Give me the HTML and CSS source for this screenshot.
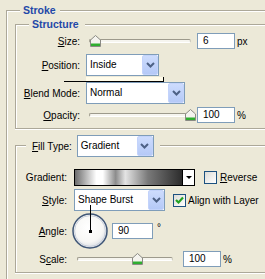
FILE: index.html
```html
<!DOCTYPE html>
<html>
<head>
<meta charset="utf-8">
<link rel="stylesheet" href="styles.css">
</head>
<body>
<div class="panel">
  <div class="group outer">
    <div class="title t-main">Stroke</div>

    <div class="group inner structure">
      <div class="title t-sub">Structure</div>

      <div class="row r-size">
        <span class="lbl lbl-s"><u>S</u>ize:</span>
        <div class="slider sl-s">
          <div class="track"></div>
          <svg class="thumb" style="left:4px" width="11" height="12" viewBox="0 0 11 12"><path d="M5.5 0.5 L10.5 5 V11.5 H0.5 V5 Z" fill="#f4f3ee" stroke="#8a8a84"/><rect x="1" y="8.5" width="9" height="2.5" fill="#2fae2f"/></svg>
        </div>
        <div class="input in-s">6</div>
        <span class="unit">px</span>
      </div>

      <div class="row r-pos">
        <span class="lbl lbl-s"><u>P</u>osition:</span>
        <div class="select sel-pos"><span class="val">Inside</span><span class="btn"><svg width="9" height="6" viewBox="0 0 9 6"><polyline points="1,1 4.5,4.5 8,1" fill="none" stroke="#4d6185" stroke-width="2"/></svg></span></div>
      </div>

      <div class="row r-blend">
        <span class="lbl lbl-s"><u>B</u>lend Mode:</span>
        <div class="select sel-blend"><span class="val">Normal</span><span class="btn"><svg width="9" height="6" viewBox="0 0 9 6"><polyline points="1,1 4.5,4.5 8,1" fill="none" stroke="#4d6185" stroke-width="2"/></svg></span></div>
      </div>

      <div class="row r-opa">
        <span class="lbl lbl-s"><u>O</u>pacity:</span>
        <div class="slider sl-s">
          <div class="track"></div>
          <svg class="thumb" style="left:99px" width="11" height="12" viewBox="0 0 11 12"><path d="M5.5 0.5 L10.5 5 V11.5 H0.5 V5 Z" fill="#f4f3ee" stroke="#8a8a84"/><rect x="1" y="8.5" width="9" height="2.5" fill="#2fae2f"/></svg>
        </div>
        <div class="input in-s">100</div>
        <span class="unit">%</span>
      </div>
    </div>

    <div class="group inner fill">
      <div class="title t-fill">
        <span class="fill-lbl"><u>F</u>ill Type:</span>
        <div class="select sel-fill"><span class="val">Gradient</span><span class="btn"><svg width="9" height="6" viewBox="0 0 9 6"><polyline points="1,1 4.5,4.5 8,1" fill="none" stroke="#4d6185" stroke-width="2"/></svg></span></div>
      </div>

      <div class="row r-grad">
        <span class="lbl lbl-f">Gradient:</span>
        <div class="gradbar"><div class="gfill"></div><div class="gdrop"><span class="tri"></span></div></div>
        <label class="check ck-rev"><span class="box"></span><span><u>R</u>everse</span></label>
      </div>

      <div class="row r-style">
        <span class="lbl lbl-f"><u>S</u>tyle:</span>
        <div class="select sel-style"><span class="val">Shape Burst</span><span class="btn"><svg width="9" height="6" viewBox="0 0 9 6"><polyline points="1,1 4.5,4.5 8,1" fill="none" stroke="#4d6185" stroke-width="2"/></svg></span></div>
        <label class="check ck-align"><span class="box on"><svg width="11" height="11" viewBox="0 0 11 11"><path d="M2 5 L4.5 7.5 L9 2.5" fill="none" stroke="#21a121" stroke-width="2.2"/></svg></span><span>Align with Layer</span></label>
      </div>

      <div class="row r-angle">
        <span class="lbl lbl-f"><u>A</u>ngle:</span>
        <svg class="dial" width="36" height="36" viewBox="0 0 36 36">
          <defs>
            <radialGradient id="dg" cx="0.45" cy="0.4" r="0.6">
              <stop offset="0" stop-color="#ffffff"/>
              <stop offset="0.7" stop-color="#f7f7f5"/>
              <stop offset="1" stop-color="#d9dde4"/>
            </radialGradient>
          </defs>
          <circle cx="18" cy="18" r="17" fill="url(#dg)" stroke="#3f5677" stroke-width="1.5"/>
          <circle cx="18" cy="18" r="15.4" fill="none" stroke="#c9d0dc" stroke-width="1"/>
          <line x1="18.5" y1="18" x2="18.5" y2="-8" stroke="#000" stroke-width="1"/>
          <rect x="17" y="17" width="3" height="3" fill="#000"/>
        </svg>
        <div class="input in-angle">90</div>
        <span class="deg">°</span>
      </div>

      <div class="row r-scale">
        <span class="lbl lbl-f">S<u>c</u>ale:</span>
        <div class="slider sl-f">
          <div class="track"></div>
          <svg class="thumb" style="left:58px" width="11" height="12" viewBox="0 0 11 12"><path d="M5.5 0.5 L10.5 5 V11.5 H0.5 V5 Z" fill="#f4f3ee" stroke="#8a8a84"/><rect x="1" y="8.5" width="9" height="2.5" fill="#2fae2f"/></svg>
        </div>
        <div class="input in-scale">100</div>
        <span class="unit">%</span>
      </div>
    </div>
  </div>
  <div class="glitch"></div>
</div>
</body>
</html>
```

FILE: styles.css
```css
html, body {
  margin: 0;
  padding: 0;
  overflow: hidden;
  background: #ece9d8;
}
body {
  font-family: "Liberation Sans", Arial, sans-serif;
  font-size: 10px;
  color: #000;
}
.panel {
  position: relative;
  width: 265px;
  height: 279px;
  padding: 10px 0 0 6px;
  box-sizing: border-box;
  overflow: hidden;
}
.group {
  border-top: 1px solid #aca899;
  border-left: 1px solid #aca899;
  box-shadow: inset 1px 1px 0 #fff;
}
.outer {
  height: 269px;
  box-sizing: border-box;
}
.inner {
  border-bottom: 1px solid #aca899;
  box-shadow: inset 1px 1px 0 #fff, 0 1px 0 #fff;
  margin-left: 8px;
}
.structure {
  margin-top: 7px;
  padding-bottom: 4px;
}
.fill {
  margin-top: 16px;
  padding-bottom: 4px;
}
.title {
  width: max-content;
  background: #ece9d8;
}
.t-main, .t-sub {
  height: 13px;
  line-height: 13px;
  margin: -7px 0 0 13px;
  color: #1f48a8;
  font-weight: bold;
  font-size: 10.5px;
}
.t-main { padding: 0 4px 0 3px; }
.t-sub { padding: 0 6px 0 3px; }
.t-fill {
  display: flex;
  align-items: center;
  gap: 5px;
  height: 22px;
  margin: -11px 0 0 10px;
  padding: 0 6px;
}
.row {
  display: flex;
  align-items: center;
}
.lbl {
  flex: none;
  text-align: right;
}
.lbl-s { width: 64px; margin-right: 6px; }
.lbl-f { width: 51px; margin-right: 7px; }

.r-size { height: 18px; margin-top: 1px; }
.r-pos { height: 22px; margin-top: 4px; }
.r-blend { height: 22px; margin-top: 6px; }
.r-opa { height: 18px; margin-top: 2px; }

.r-grad { height: 17px; margin-top: 12px; }
.r-style { height: 22px; margin-top: 3px; }
.r-angle { height: 36px; margin-top: 2px; }
.r-scale { height: 18px; margin-top: 1px; }

/* slider */
.slider {
  position: relative;
  height: 12px;
  display: flex;
  align-items: center;
  flex: none;
}
.sl-s { width: 108px; margin-right: 3px; }
.sl-f { width: 102px; margin-right: 7px; }
.track {
  flex: 1;
  margin: 0 3px;
  height: 2px;
  border: 1px solid;
  border-color: #9d9a8c #c9c7bb #ffffff #9d9a8c;
  border-radius: 2px;
  background: #f6f5ef;
}
.thumb {
  position: absolute;
  top: 0;
}

/* input */
.input {
  box-sizing: border-box;
  height: 16px;
  line-height: 14px;
  border: 1px solid #7f9db9;
  background: #fff;
  padding-left: 5px;
  flex: none;
}
.in-s, .in-scale { width: 38px; }
.in-angle { width: 41px; margin-left: 4px; }
.unit { margin-left: 2px; }
.deg { margin: -8px 0 0 4px; }

/* select */
.select {
  box-sizing: border-box;
  height: 22px;
  display: flex;
  border: 1px solid #7f9db9;
  background: #fff;
  flex: none;
}
.select .val {
  flex: 1;
  padding-left: 3px;
  line-height: 20px;
}
.select .btn {
  box-sizing: border-box;
  width: 16px;
  height: 20px;
  border: 1px solid #c3d3fb;
  border-radius: 2px;
  background: linear-gradient(#cddcfd, #b5c9f7);
  display: flex;
  align-items: center;
  justify-content: center;
}
.sel-pos { width: 73px; }
.sel-blend { width: 99px; }
.sel-fill { width: 77px; }
.sel-style { width: 91px; margin-right: 8px; }

/* gradient bar */
.gradbar {
  box-sizing: border-box;
  width: 121px;
  height: 17px;
  border: 1px solid #000;
  display: flex;
  margin-right: 9px;
}
.gfill {
  flex: 1;
  background: linear-gradient(to right, #6c6c6c 0%, #ffffff 20%, #ffffff 26%, #8c8c8c 38%, #e4e4e4 47%, #7a7a7a 68%, #2c2c2c 100%);
}
.gdrop {
  width: 11px;
  border-left: 1px solid #000;
  background: #fff;
  display: flex;
  align-items: center;
  justify-content: center;
}
.tri {
  width: 0;
  height: 0;
  border-left: 3px solid transparent;
  border-right: 3px solid transparent;
  border-top: 3px solid #000;
}

/* checkbox */
.check {
  display: flex;
  align-items: center;
  gap: 3px;
}
.box {
  box-sizing: border-box;
  width: 13px;
  height: 13px;
  border: 1px solid #1c5180;
  background: linear-gradient(135deg, #dcdcd7, #ffffff);
  display: flex;
  align-items: center;
  justify-content: center;
}
.ck-align { gap: 2px; }

/* dial */
.dial {
  margin-left: -2px;
  overflow: visible;
  flex: none;
}

/* leftover tooltip remnant */
.glitch {
  position: absolute;
  left: 64px;
  top: 77px;
  width: 99px;
  height: 4px;
  border-bottom: 1px solid #000;
  border-right: 1px solid #000;
  background: linear-gradient(to right, transparent 22px, #fffbe9 22px);
}
```
